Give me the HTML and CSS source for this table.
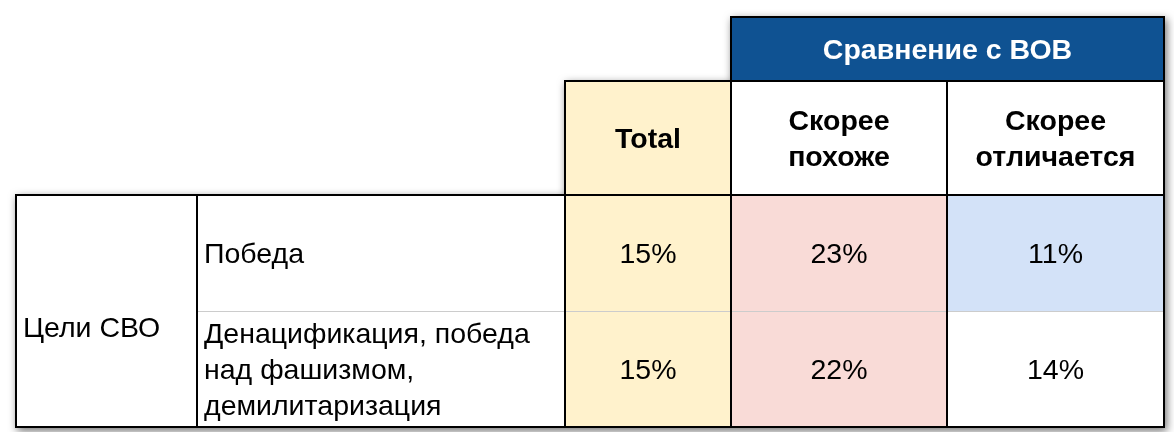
FILE: index.html
```html
<!DOCTYPE html>
<html lang="ru">
<head>
<meta charset="utf-8">
<title>Цели СВО — сравнение с ВОВ</title>
<link rel="stylesheet" href="styles.css">
</head>
<body>
<div class="frame">
<table class="grid">
  <colgroup>
    <col class="c-cat">
    <col class="c-label">
    <col class="c-total">
    <col class="c-sim">
    <col class="c-diff">
  </colgroup>
  <tr class="r-group">
    <td class="blank" colspan="3"></td>
    <th class="group" colspan="2">Сравнение с ВОВ</th>
  </tr>
  <tr class="r-head">
    <td class="blank" colspan="2"></td>
    <th class="head total">Total</th>
    <th class="head">Скорее<br>похоже</th>
    <th class="head">Скорее<br>отличается</th>
  </tr>
  <tr class="r-body r-first">
    <td class="cat" rowspan="2">Цели СВО</td>
    <td class="label">Победа</td>
    <td class="num total">15%</td>
    <td class="num pink">23%</td>
    <td class="num blue">11%</td>
  </tr>
  <tr class="r-body r-second">
    <td class="label">Денацификация, победа<br>над фашизмом,<br>демилитаризация</td>
    <td class="num total">15%</td>
    <td class="num pink">22%</td>
    <td class="num">14%</td>
  </tr>
</table>
</div>
</body>
</html>
```

FILE: styles.css
```css
html, body {
  margin: 0;
  padding: 0;
  background: #ffffff;
}

body {
  font-family: "Liberation Sans", Arial, sans-serif;
  color: #000000;
}

.frame {
  display: inline-block;
  margin: 16px 0 0 15px;
  filter: drop-shadow(2px 3px 4px rgba(0, 0, 0, 0.55));
}

.grid {
  border-collapse: collapse;
  table-layout: fixed;
  width: 1148px;
}

.c-cat { width: 181px; }
.c-label { width: 368px; }
.c-total { width: 166px; }
.c-sim { width: 216px; }
.c-diff { width: 217px; }

.grid th,
.grid td {
  border: 2px solid #000000;
  background: #ffffff;
  font-size: 28.5px;
  line-height: 36px;
  padding: 0 6px;
}

.grid td.blank {
  border: none;
  background: transparent;
}

.r-group { height: 64px; }
.r-head { height: 114px; }
.r-first { height: 116px; }
.r-second { height: 116px; }

.group {
  background: #0f5292 !important;
  color: #ffffff;
  font-weight: bold;
  text-align: center;
  vertical-align: middle;
}

.head {
  font-weight: bold;
  text-align: center;
  vertical-align: middle;
}

.cat {
  text-align: left;
  vertical-align: middle;
  padding-top: 32px !important;
}

.label {
  text-align: left;
  vertical-align: middle;
}

.num {
  text-align: center;
  vertical-align: middle;
}

.grid .total { background: #fff2cc; }
.grid .pink { background: #f9dbd7; }
.grid .blue { background: #d3e2f8; }

.r-first .label,
.r-first .num {
  border-bottom: 1px solid #cccccc;
}

.r-second .label,
.r-second .num {
  border-top: 1px solid #cccccc;
}
```
